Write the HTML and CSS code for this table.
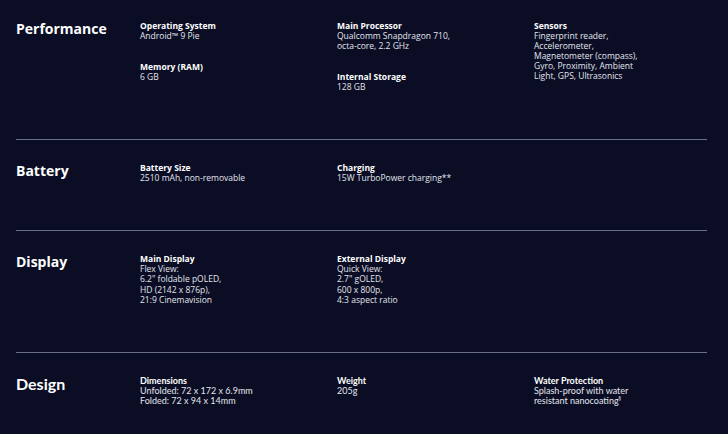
FILE: index.html
```html
<!DOCTYPE html>
<html>
<head>
<meta charset="utf-8">
<link rel="stylesheet" href="styles.css">
</head>
<body>
<div class="specs">
  <section class="sec first">
    <h2 class="title">Performance</h2>
    <div class="col">
      <div class="item"><div class="lbl">Operating System</div><div class="val">Android™ 9 Pie</div></div>
      <div class="item"><div class="lbl">Memory (RAM)</div><div class="val">6 GB</div></div>
    </div>
    <div class="col">
      <div class="item"><div class="lbl">Main Processor</div><div class="val">Qualcomm Snapdragon 710,<br>octa-core, 2.2 GHz</div></div>
      <div class="item"><div class="lbl">Internal Storage</div><div class="val">128 GB</div></div>
    </div>
    <div class="col">
      <div class="item"><div class="lbl">Sensors</div><div class="val">Fingerprint reader,<br>Accelerometer,<br>Magnetometer (compass),<br>Gyro, Proximity, Ambient<br>Light, GPS, Ultrasonics</div></div>
    </div>
  </section>
  <section class="sec">
    <h2 class="title">Battery</h2>
    <div class="col">
      <div class="item"><div class="lbl">Battery Size</div><div class="val">2510 mAh, non-removable</div></div>
    </div>
    <div class="col">
      <div class="item"><div class="lbl">Charging</div><div class="val">15W TurboPower charging**</div></div>
    </div>
    <div class="col"></div>
  </section>
  <section class="sec">
    <h2 class="title">Display</h2>
    <div class="col">
      <div class="item"><div class="lbl">Main Display</div><div class="val">Flex View:<br>6.2" foldable pOLED,<br>HD (2142 x 876p),<br>21:9 Cinemavision</div></div>
    </div>
    <div class="col">
      <div class="item"><div class="lbl">External Display</div><div class="val">Quick View:<br>2.7" gOLED,<br>600 x 800p,<br>4:3 aspect ratio</div></div>
    </div>
    <div class="col"></div>
  </section>
  <section class="sec last narrow">
    <h2 class="title">Design</h2>
    <div class="col">
      <div class="item"><div class="lbl">Dimensions</div><div class="val">Unfolded: 72 x 172 x 6.9mm<br>Folded: 72 x 94 x 14mm</div></div>
    </div>
    <div class="col">
      <div class="item"><div class="lbl">Weight</div><div class="val">205g</div></div>
    </div>
    <div class="col">
      <div class="item"><div class="lbl">Water Protection</div><div class="val">Splash-proof with water<br>resistant nanocoating<sup>§</sup></div></div>
    </div>
  </section>
</div>
</body>
</html>
```

FILE: styles.css
```css
html, body {
  margin: 0;
  padding: 0;
  background: #0a0d24;
  height: 100%;
}
body {
  font-family: "Open Sans", "Liberation Sans", sans-serif;
  color: #ffffff;
  overflow: hidden;
}
.specs {
  padding: 0 21px 0 16px;
}
.sec {
  display: grid;
  grid-template-columns: 124px 197px 197px 1fr;
  padding: 23px 0 47px;
  border-bottom: 1px solid #6a6d86;
}
.sec.first {
  padding-top: 21px;
}
.sec.last {
  border-bottom: none;
}
.title {
  margin: 0;
  font-size: 14px;
  line-height: 16px;
  font-weight: 700;
  color: #ffffff;
}
.item {
  margin-bottom: 21px;
}
.item:last-child {
  margin-bottom: 0;
}
.lbl {
  font-size: 8.5px;
  line-height: 10px;
  font-weight: 700;
  color: #ffffff;
}
.val {
  font-size: 8.5px;
  line-height: 10.1px;
  font-weight: 400;
  color: #e4e5ec;
}
.val sup {
  font-size: 5px;
  line-height: 0;
  vertical-align: 4px;
}
.narrow {
  font-family: "Lato", "Liberation Sans", sans-serif;
}
.narrow .title {
  font-size: 16px;
}
.narrow .lbl, .narrow .val {
  font-size: 9px;
}
```
